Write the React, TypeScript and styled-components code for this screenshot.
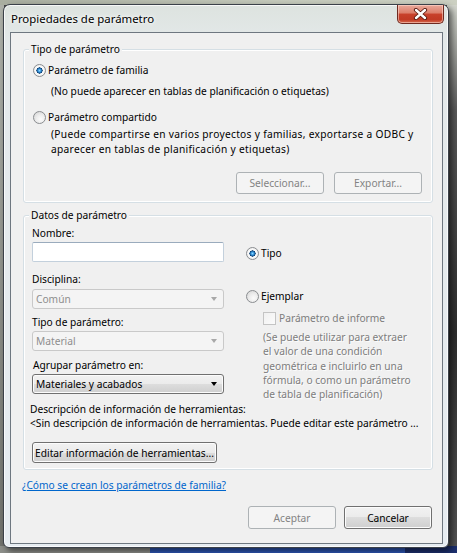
import React from "react";
import styled, { createGlobalStyle, css } from "styled-components";

const FONT = `"Noto Sans", "Open Sans", "DejaVu Sans", sans-serif`;

const Global = createGlobalStyle`
  html, body { margin: 0; padding: 0; }
  body { background: #3a3a3a; font-family: ${FONT}; }
`;

const Page = styled.div`
  width: 457px;
  height: 553px;
  box-sizing: border-box;
  overflow: hidden;
  padding: 4px 0 0 3px;
  background:
    linear-gradient(to right, #a9aea0 0, #c4c9bb 60%, #ccd0c2 100%) top / 100% 5px no-repeat,
    linear-gradient(to right, #8d8f8a 0 150px, #2d56b5 150px 405px, #1c2f6e 405px 100%) bottom / 100% 7px no-repeat,
    linear-gradient(#b0b3ab, #6f716c) left / 4px 100% no-repeat,
    linear-gradient(#d8dbd2 0, #5a5a5a 20%, #2e2e2e 60%, #555 100%) right / 10px 100% no-repeat,
    #444;
  font-family: ${FONT};
  font-size: 10.2px;
  color: #000;
`;

const Window = styled.div`
  width: 446px;
  height: 544px;
  box-sizing: border-box;
  border: 1px solid #3b4149;
  border-radius: 7px 7px 6px 6px;
  background: linear-gradient(#dde3df 0, #e4e9ea 40px, #e6ecf1 100%);
  box-shadow: inset 0 0 0 1px rgba(255, 255, 255, 0.75), 3px 3px 6px rgba(0, 0, 0, 0.55);
  display: flex;
  flex-direction: column;
`;

const TitleBar = styled.div`
  height: 27px;
  flex: none;
  display: flex;
  align-items: center;
  padding-left: 7px;
`;

const TitleText = styled.span`
  font-size: 11.4px;
  color: #000;
  text-shadow: 0 0 6px #fff, 0 0 3px #fff;
`;

const CloseButton = styled.div`
  margin-left: auto;
  margin-right: 4px;
  align-self: flex-start;
  width: 47px;
  height: 19px;
  box-sizing: border-box;
  border: 1px solid #6e2a20;
  border-top: none;
  border-radius: 0 0 5px 5px;
  background: linear-gradient(#e9a99b 0%, #dc7d69 45%, #c8412b 50%, #c13a24 80%, #d56a4e 100%);
  box-shadow: inset 0 0 0 1px rgba(255, 220, 210, 0.55);
  display: flex;
  align-items: center;
  justify-content: center;
`;

const Client = styled.div`
  flex: 1;
  margin: 0 5px 3px 6px;
  border: 1px solid #6e7780;
  background: #f0f0f0;
  padding: 16px 9px 0 12px;
  display: flex;
  flex-direction: column;
`;

const Group = styled.div<{ $pad: string }>`
  position: relative;
  border: 1px solid #d5dfe5;
  border-radius: 3px;
  box-shadow: inset 0 0 0 1px #fff;
  padding: ${(p) => p.$pad};
  & + & {
    margin-top: 12px;
  }
`;

const Legend = styled.span`
  position: absolute;
  top: -8px;
  left: 5px;
  padding: 0 2px;
  background: #f0f0f0;
  line-height: 14px;
  white-space: nowrap;
`;

const RadioRow = styled.label<{ $indent?: number; $mt?: number }>`
  display: flex;
  align-items: center;
  gap: 2px;
  height: 14px;
  line-height: 14px;
  margin-left: ${(p) => p.$indent ?? 0}px;
  margin-top: ${(p) => p.$mt ?? 0}px;
  white-space: nowrap;
`;

const RadioDot = styled.span<{ $on?: boolean }>`
  flex: none;
  width: 13px;
  height: 13px;
  box-sizing: border-box;
  border-radius: 50%;
  border: 1px solid #8a8d90;
  background: radial-gradient(circle at 60% 65%, #fbfbfb 0, #ececec 45%, #d0d0d0 100%);
  ${(p) =>
    p.$on &&
    css`
      background: radial-gradient(
        circle at 50% 50%,
        #8fd6ff 0,
        #3a9be0 18%,
        #145694 32%,
        #0f3f70 38%,
        #ffffff 42%,
        #f0f0f0 70%,
        #d9d9d9 100%
      );
    `}
`;

const Note = styled.div<{ $indent?: number; $mt?: number; $lh?: number; $ls?: number; $muted?: boolean }>`
  margin-left: ${(p) => p.$indent ?? 0}px;
  margin-top: ${(p) => p.$mt ?? 0}px;
  line-height: ${(p) => p.$lh ?? 14}px;
  letter-spacing: ${(p) => p.$ls ?? 0}px;
  white-space: nowrap;
  ${(p) =>
    p.$muted &&
    css`
      color: #7d7d7d;
      text-shadow: 1px 1px 0 rgba(255, 255, 255, 0.8);
    `}
`;

const ButtonRow = styled.div<{ $mt: number; $gap: number; $pr: number }>`
  display: flex;
  justify-content: flex-end;
  gap: ${(p) => p.$gap}px;
  margin-top: ${(p) => p.$mt}px;
  padding-right: ${(p) => p.$pr}px;
`;

const Button = styled.button<{ $w: number; $h?: number; $ml?: number; $mt?: number }>`
  width: ${(p) => p.$w}px;
  height: ${(p) => p.$h ?? 22}px;
  margin-left: ${(p) => p.$ml ?? 0}px;
  margin-top: ${(p) => p.$mt ?? 0}px;
  box-sizing: border-box;
  padding: 0;
  font-family: ${FONT};
  font-size: 10.2px;
  color: #000;
  border: 1px solid #707070;
  border-radius: 3px;
  background: linear-gradient(#f2f2f2 0%, #ebebeb 50%, #dddddd 50%, #cfcfcf 100%);
  box-shadow: inset 0 0 0 1px #fcfcfc;
  white-space: nowrap;
  &:disabled {
    border-color: #adb2b5;
    background: #f4f4f4;
    color: #838383;
    box-shadow: none;
  }
`;

const DataGrid = styled.div`
  display: grid;
  grid-template-columns: 192px 1fr;
  align-items: start;
  column-gap: 22px;
  padding-left: 8px;
`;

const Column = styled.div<{ $pt?: number; $mb?: number }>`
  display: flex;
  flex-direction: column;
  padding-top: ${(p) => p.$pt ?? 0}px;
  margin-bottom: ${(p) => p.$mb ?? 0}px;
`;

const Caption = styled.div<{ $mt: number; $indent?: number }>`
  margin-top: ${(p) => p.$mt}px;
  margin-left: ${(p) => p.$indent ?? 0}px;
  line-height: 14px;
  white-space: nowrap;
`;

const TextInput = styled.input<{ $mt: number }>`
  margin: ${(p) => p.$mt}px 0 0 0;
  width: 192px;
  height: 20px;
  box-sizing: border-box;
  border: 1px solid #c3d0dc;
  border-top-color: #9aabbd;
  border-radius: 2px;
  background: #fff;
  padding: 0 3px;
  font-family: ${FONT};
  font-size: 10.2px;
  outline: none;
`;

const Combo = styled.div<{ $mt: number; $disabled?: boolean }>`
  margin-top: ${(p) => p.$mt}px;
  width: 192px;
  height: 20px;
  box-sizing: border-box;
  display: flex;
  align-items: center;
  justify-content: space-between;
  padding: 0 5px 0 3px;
  border: 1px solid #707070;
  border-radius: 3px;
  background: linear-gradient(#f2f2f2 0%, #ebebeb 50%, #dddddd 50%, #cfcfcf 100%);
  box-shadow: inset 0 0 0 1px #fcfcfc;
  color: #000;
  ${(p) =>
    p.$disabled &&
    css`
      border-color: #c9c9c9;
      background: #f4f4f4;
      box-shadow: none;
      color: #8e8e8e;
    `}
`;

const Arrow = styled.span<{ $disabled?: boolean }>`
  width: 0;
  height: 0;
  border-left: 3.5px solid transparent;
  border-right: 3.5px solid transparent;
  border-top: 4px solid ${(p) => (p.$disabled ? "#a8a8a8" : "#000")};
  margin-right: 1px;
`;

const CheckRow = styled.label<{ $mt: number; $indent: number }>`
  display: flex;
  align-items: center;
  gap: 3px;
  height: 14px;
  margin-top: ${(p) => p.$mt}px;
  margin-left: ${(p) => p.$indent}px;
  color: #7d7d7d;
  white-space: nowrap;
`;

const CheckBox = styled.span`
  flex: none;
  width: 13px;
  height: 13px;
  box-sizing: border-box;
  border: 1px solid #c4c4c4;
  background: linear-gradient(135deg, #f0f0f0, #fbfbfb);
`;

const TooltipSection = styled.div`
  display: flex;
  flex-direction: column;
  align-items: flex-start;
  padding-left: 6px;
`;

const HelpLink = styled.a`
  margin: 8px 0 0 -1px;
  line-height: 14px;
  color: #0066cc;
  text-decoration: underline;
  align-self: flex-start;
  cursor: pointer;
`;

function CloseGlyph() {
  return (
    <svg width="15" height="12" viewBox="0 0 15 12">
      <path d="M3 2 L12 10 M12 2 L3 10" stroke="#5a1a10" strokeWidth="4.2" strokeLinecap="round" />
      <path d="M3 2 L12 10 M12 2 L3 10" stroke="#ffffff" strokeWidth="2.4" strokeLinecap="round" />
    </svg>
  );
}

export default function App() {
  return (
    <Page>
      <Global />
      <Window>
        <TitleBar>
          <TitleText>Propiedades de parámetro</TitleText>
          <CloseButton>
            <CloseGlyph />
          </CloseButton>
        </TitleBar>
        <Client>
          <Group $pad="13px 0 8px 0">
            <Legend>Tipo de parámetro</Legend>
            <RadioRow $indent={9}>
              <RadioDot $on />
              Parámetro de familia
            </RadioRow>
            <Note $indent={27} $mt={7}>
              (No puede aparecer en tablas de planificación o etiquetas)
            </Note>
            <RadioRow $indent={9} $mt={12}>
              <RadioDot />
              Parámetro compartido
            </RadioRow>
            <Note $indent={27} $mt={3} $lh={15} $ls={0.3}>
              (Puede compartirse en varios proyectos y familias, exportarse a ODBC y
              <br />
              aparecer en tablas de planificación y etiquetas)
            </Note>
            <ButtonRow $mt={15} $gap={10} $pr={10}>
              <Button $w={88} disabled>
                Seleccionar...
              </Button>
              <Button $w={88} disabled>
                Exportar...
              </Button>
            </ButtonRow>
          </Group>

          <Group $pad="0 0 6px 0">
            <Legend>Datos de parámetro</Legend>
            <DataGrid>
              <Column>
                <Caption $mt={10}>Nombre:</Caption>
                <TextInput $mt={2} />
                <Caption $mt={10}>Disciplina:</Caption>
                <Combo $mt={3} $disabled>
                  Común
                  <Arrow $disabled />
                </Combo>
                <Caption $mt={6}>Tipo de parámetro:</Caption>
                <Combo $mt={2} $disabled>
                  Material
                  <Arrow $disabled />
                </Combo>
                <Caption $mt={7} $indent={1}>
                  Agrupar parámetro en:
                </Caption>
                <Combo $mt={2}>
                  Materiales y acabados
                  <Arrow />
                </Combo>
              </Column>
              <Column $pt={30} $mb={-8}>
                <RadioRow>
                  <RadioDot $on />
                  Tipo
                </RadioRow>
                <RadioRow $mt={29}>
                  <RadioDot />
                  Ejemplar
                </RadioRow>
                <CheckRow $mt={8} $indent={17}>
                  <CheckBox />
                  Parámetro de informe
                </CheckRow>
                <Note $indent={17} $mt={5} $lh={14.3} $muted>
                  (Se puede utilizar para extraer
                  <br />
                  el valor de una condición
                  <br />
                  geométrica e incluirlo en una
                  <br />
                  fórmula, o como un parámetro
                  <br />
                  de tabla de planificación)
                </Note>
              </Column>
            </DataGrid>
            <TooltipSection>
              <Caption $mt={8}>Descripción de información de herramientas:</Caption>
              <Caption $mt={0}>
                &lt;Sin descripción de información de herramientas. Puede editar este parámetro ...
              </Caption>
              <Button $w={185} $h={21} $ml={2} $mt={12}>
                Editar información de herramientas...
              </Button>
            </TooltipSection>
          </Group>

          <HelpLink>¿Cómo se crean los parámetros de familia?</HelpLink>
          <ButtonRow $mt={14} $gap={8} $pr={1}>
            <Button $w={88} $h={23} disabled>
              Aceptar
            </Button>
            <Button $w={88} $h={23}>
              Cancelar
            </Button>
          </ButtonRow>
        </Client>
      </Window>
    </Page>
  );
}
